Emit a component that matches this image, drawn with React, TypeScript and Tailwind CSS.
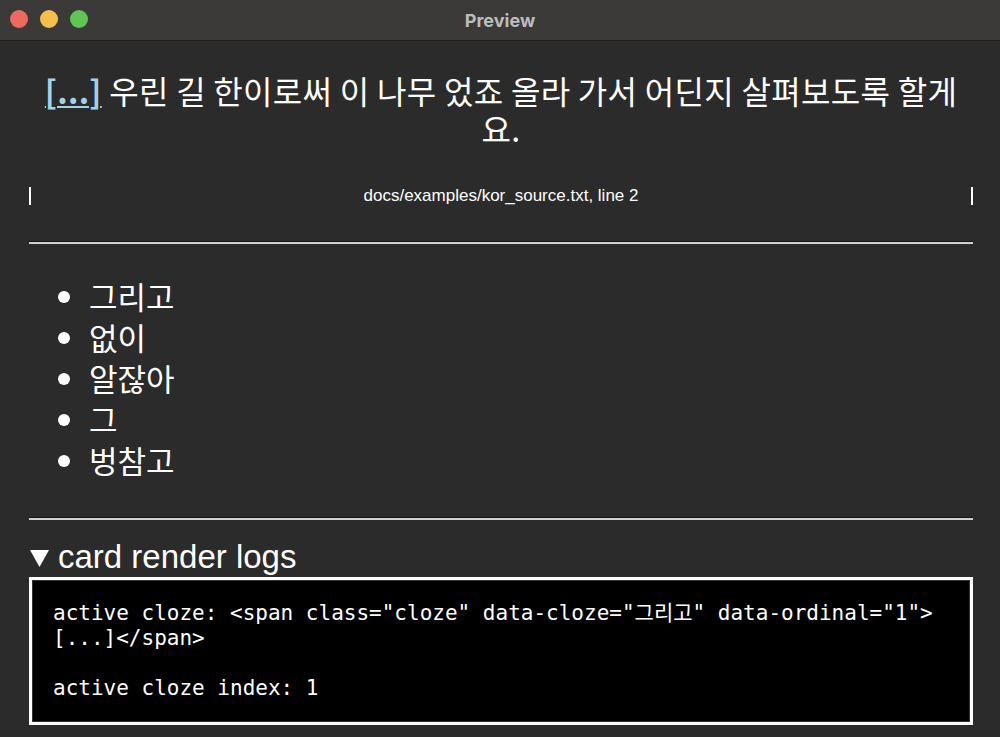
import { useState } from "react";

const words = ["그리고", "없이", "알잖아", "그", "벙참고"];

const Rule = () => (
  <div className="border-t border-[#151515] bg-[#cfcfcf] h-[3px]" />
);

export default function App() {
  const [open, setOpen] = useState(true);

  return (
    <div className="w-[1000px] h-[737px] overflow-hidden bg-[#2b2b2b] flex flex-col font-['Liberation_Sans','Noto_Sans_CJK_KR',sans-serif] text-white">
      {/* title bar */}
      <div className="relative h-[41px] shrink-0 bg-[#3b3a39] border-b border-[#1c1c1c] flex items-center justify-center">
        <div className="absolute left-[10px] top-[10px] flex gap-[12px]">
          <span className="w-[18px] h-[18px] rounded-full bg-[#ed6a5e]" />
          <span className="w-[18px] h-[18px] rounded-full bg-[#f5bf4f]" />
          <span className="w-[18px] h-[18px] rounded-full bg-[#61c554]" />
        </div>
        <span className="text-[18px] font-bold text-[#bdbdbd] font-['Inter',sans-serif]">Preview</span>
      </div>

      <div className="pl-[29px] pr-[27px] flex flex-col">
        <h1 className="mt-[30px] text-center text-[32px] leading-[38px] tracking-[0.3px] font-['Noto_Sans_CJK_KR',sans-serif]">
          <span className="font-bold text-[#a6d2e6] underline decoration-2 underline-offset-2">[...]</span>{" "}
          우린 길 한이로써 이 나무 었죠 올라 가서 어딘지 살펴보도록 할게요.
        </h1>

        <div className="mt-[40px] h-[18px] border-x-2 border-white flex items-center justify-center text-[17px]">
          docs/examples/kor_source.txt, line 2
        </div>

        <div className="mt-[36px]">
          <Rule />
        </div>

        <ul className="mt-[31px] list-disc pl-[60px] text-[31px] leading-[41px] font-['Noto_Sans_CJK_KR',sans-serif]">
          {words.map((w) => (
            <li key={w}>{w}</li>
          ))}
        </ul>

        <div className="mt-[37px]">
          <Rule />
        </div>

        <button
          onClick={() => setOpen(!open)}
          className="mt-[18px] flex items-center text-[33px] leading-[38px] text-left"
        >
          <svg width="19" height="17" viewBox="0 0 19 17" className="ml-[1px] mr-[9px] mt-[2px]">
            <path d="M0 0H19L9.5 17Z" fill="white" />
          </svg>
          card render logs
        </button>

        {open && (
          <div className="mt-[1px] border-[3px] border-white">
            <div className="border border-[#333] bg-black px-[20px] py-[20px] font-['DejaVu_Sans_Mono','Noto_Sans_CJK_KR',monospace] text-[21px] leading-[25px] whitespace-pre-wrap">
              {'active cloze: <span class="cloze" data-cloze="그리고" data-ordinal="1">\n[...]</span>\n\nactive cloze index: 1'}
            </div>
          </div>
        )}
      </div>
    </div>
  );
}
